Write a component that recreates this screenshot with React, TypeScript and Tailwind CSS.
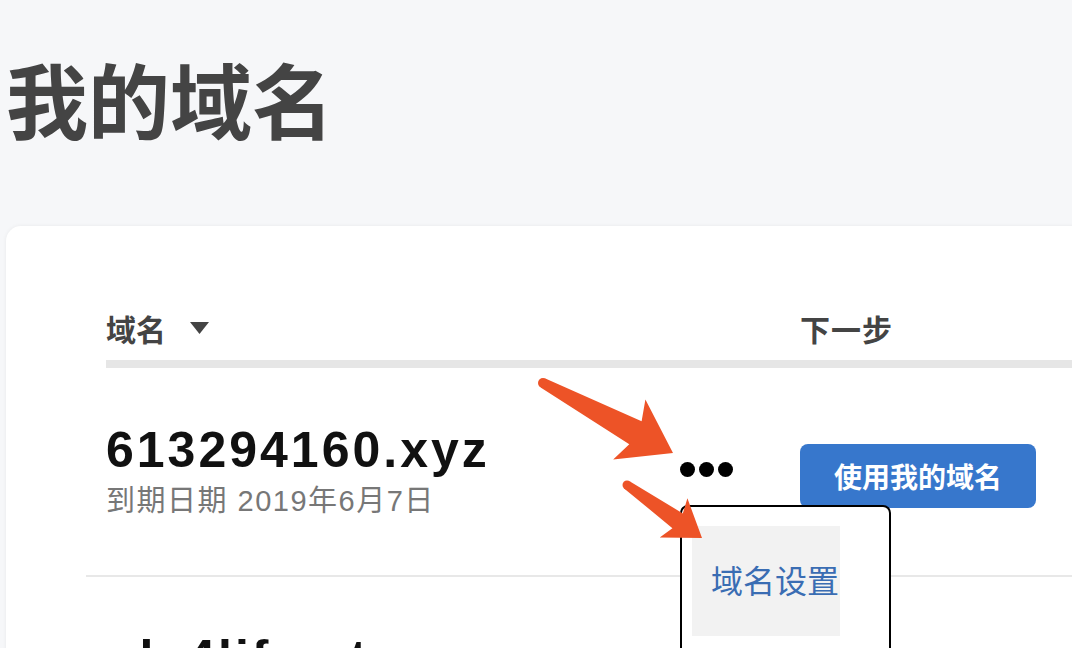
const ORANGE = "#ed5327";

// arrow drawn along its own axis: tail -> tip, with rounded tail
type ArrowSpec = {
  tail: [number, number];
  tip: [number, number];
  tailHalf: number;
  notchAt: number;
  notchHalf: number;
  barbAt: number;
  barbHalf: number;
};

const arrowPoints = (a: ArrowSpec) => {
  const dx = a.tip[0] - a.tail[0];
  const dy = a.tip[1] - a.tail[1];
  const len = Math.hypot(dx, dy);
  const d = [dx / len, dy / len];
  const n = [-d[1], d[0]];
  const pt = (along: number, perp: number) =>
    `${a.tail[0] + d[0] * along + n[0] * perp},${a.tail[1] + d[1] * along + n[1] * perp}`;
  return [
    pt(0, -a.tailHalf),
    pt(a.notchAt, -a.notchHalf),
    pt(a.barbAt, -a.barbHalf),
    pt(len, 0),
    pt(a.barbAt, a.barbHalf),
    pt(a.notchAt, a.notchHalf),
    pt(0, a.tailHalf),
  ].join(" ");
};

const ARROWS: ArrowSpec[] = [
  { tail: [543, 383], tip: [673, 453], tailHalf: 5, notchAt: 105, notchHalf: 13, barbAt: 98, barbHalf: 34 },
  { tail: [627, 485], tip: [702, 538], tailHalf: 4.5, notchAt: 62, notchHalf: 9, barbAt: 57, barbHalf: 24 },
];

const Arrows = () => (
  <svg
    className="pointer-events-none absolute left-0 top-0 z-20"
    width={1072}
    height={648}
    viewBox="0 0 1072 648"
  >
    {ARROWS.map((a, i) => (
      <g key={i} fill={ORANGE}>
        <polygon points={arrowPoints(a)} />
        <circle cx={a.tail[0]} cy={a.tail[1]} r={a.tailHalf} />
      </g>
    ))}
  </svg>
);

const DomainRow = ({
  name,
  expires,
  withMenu,
}: {
  name: string;
  expires?: string;
  withMenu?: boolean;
}) => (
  <div className="grid grid-cols-[574px_120px_236px] items-start">
    <div>
      <div className="font-['Liberation_Sans',sans-serif] text-[50px] font-bold leading-none tracking-[3px] text-[#111]">
        {name}
      </div>
      {expires && (
        <div className="mt-[12px] font-['Liberation_Sans','Noto_Sans_CJK_SC',sans-serif] text-[29px] leading-none tracking-[1.5px] text-[#777]">
          {expires}
        </div>
      )}
    </div>

    {withMenu && (
      <div className="relative mt-[37px]">
        <div className="flex gap-[4px]">
          <span className="h-[15px] w-[15px] rounded-full bg-black" />
          <span className="h-[15px] w-[15px] rounded-full bg-black" />
          <span className="h-[15px] w-[15px] rounded-full bg-black" />
        </div>
        {/* open dropdown */}
        <div className="absolute left-0 top-[43px] z-10 h-[170px] w-[211px] rounded-[8px] border-2 border-black bg-white pl-[10px] pt-[19px]">
          <div className="flex h-[110px] w-[148px] items-center bg-[#f2f2f2] pb-[4px] pl-[19px] text-[32px] leading-none text-[#3a6db3]">
            域名设置
          </div>
        </div>
      </div>
    )}

    {withMenu && (
      <button className="mt-[19px] flex h-[64px] w-[236px] items-center justify-center rounded-[8px] bg-[#3777cc] text-[28px] font-bold leading-none text-white">
        使用我的域名
      </button>
    )}
  </div>
);

export default function App() {
  return (
    <div className="relative h-[648px] overflow-hidden bg-[#f6f7f9] font-['Noto_Sans_CJK_SC',sans-serif]">
      <h1 className="pl-[6px] pt-[57px] text-[82px] font-bold leading-none text-[#444]">
        我的域名
      </h1>

      <div className="ml-[6px] mt-[87px] w-[1150px] rounded-[15px] bg-white pl-[100px] pt-[87px] shadow-[0_0_4px_rgba(0,0,0,0.06)]">
        {/* table header */}
        <div className="grid grid-cols-[694px_auto] items-center text-[30px] font-bold leading-none text-[#444]">
          <div className="flex items-center">
            <span>域名</span>
            <svg className="ml-[24px]" width="19" height="12" viewBox="0 0 19 12">
              <path d="M0 0h19L9.5 12z" fill="#444" />
            </svg>
          </div>
          <div className="tracking-[1px]">下一步</div>
        </div>
        <div className="mt-[17px] h-[8px] bg-[#e6e6e6]" />

        <div className="pt-[57px] pb-[59px]">
          <DomainRow name="613294160.xyz" expires="到期日期 2019年6月7日" withMenu />
        </div>
        <div className="-ml-[20px] h-[2px] bg-[#e8e8e8]" />

        <div className="pt-[56px] pb-[60px]">
          <DomainRow name="ola4life.store" />
        </div>
      </div>

      <Arrows />
    </div>
  );
}
